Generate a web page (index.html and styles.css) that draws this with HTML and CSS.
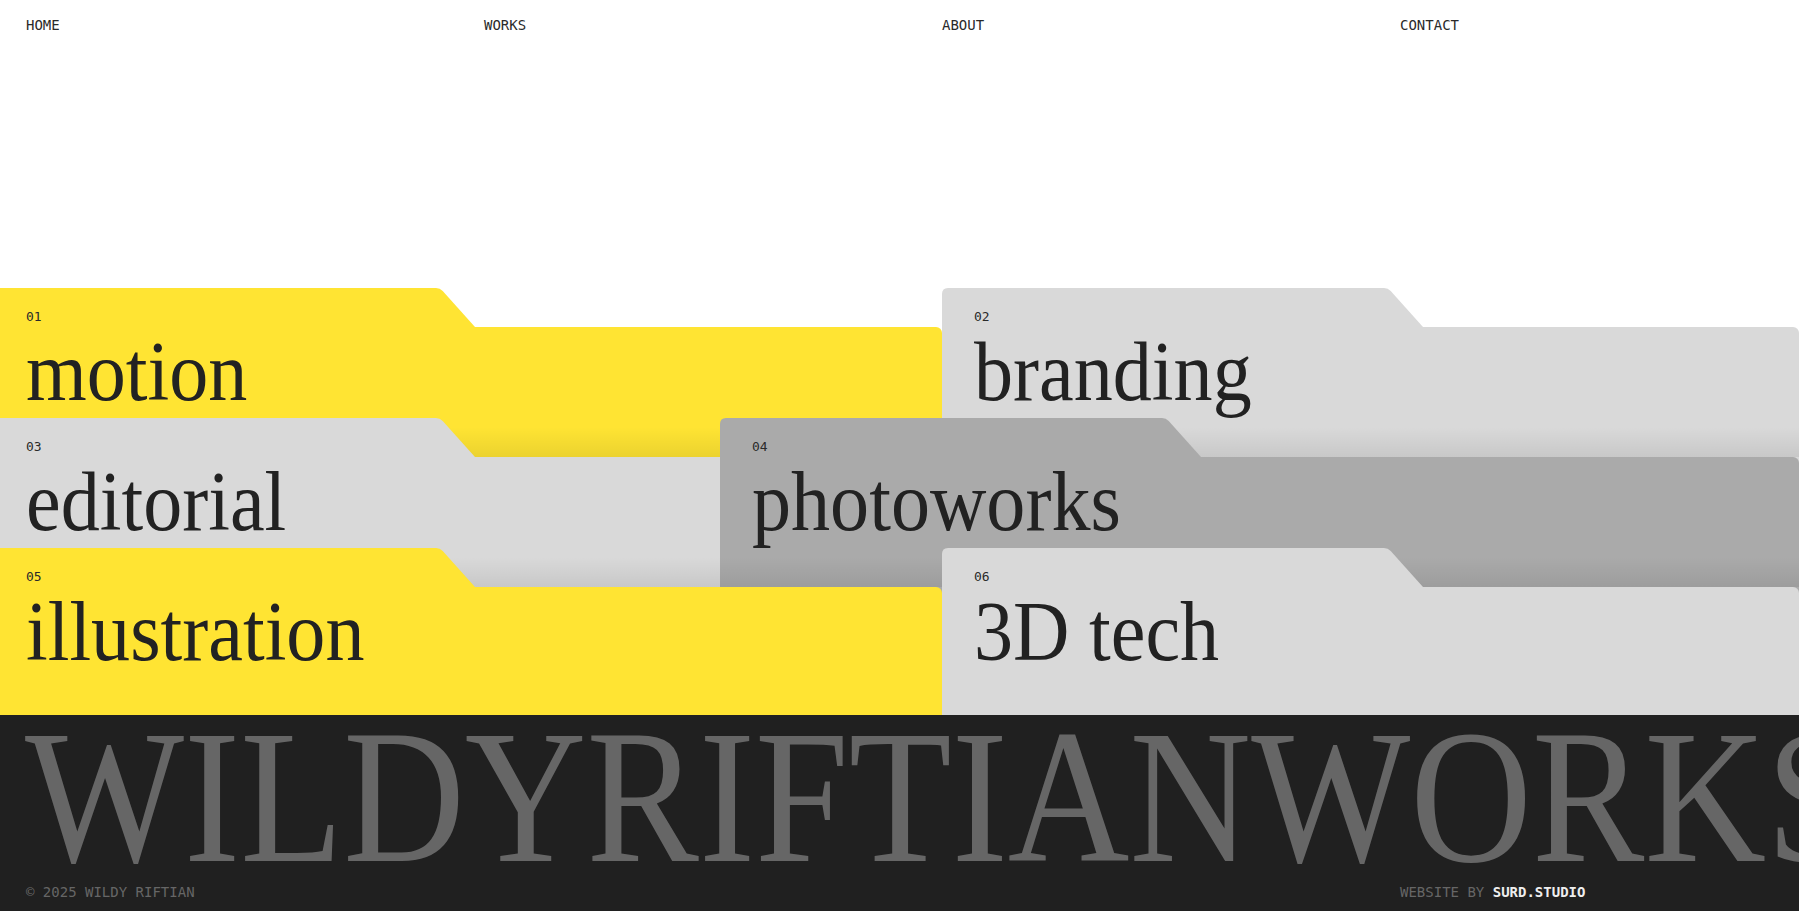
FILE: index.html
```html
<!DOCTYPE html>
<html lang="en">
<head>
<meta charset="utf-8">
<title>Wildy Riftian Works</title>
<link rel="stylesheet" href="styles.css">
</head>
<body>
<header class="nav">
  <a class="nav-link" href="#">HOME</a>
  <a class="nav-link" href="#">WORKS</a>
  <a class="nav-link" href="#">ABOUT</a>
  <a class="nav-link" href="#">CONTACT</a>
</header>

<main class="folders">
  <article class="card card-yellow pos-1">
    <div class="tab"><span class="num">01</span></div>
    <div class="body"><h2 class="word">motion</h2></div>
  </article>
  <article class="card card-light pos-2">
    <div class="tab"><span class="num">02</span></div>
    <div class="body"><h2 class="word">branding</h2></div>
  </article>
  <article class="card card-light pos-3 has-shadow">
    <div class="tab"><span class="num">03</span></div>
    <div class="body"><h2 class="word">editorial</h2></div>
  </article>
  <article class="card card-dark pos-4 has-shadow">
    <div class="tab"><span class="num">04</span></div>
    <div class="body"><h2 class="word">photoworks</h2></div>
  </article>
  <article class="card card-yellow pos-5 has-shadow">
    <div class="tab"><span class="num">05</span></div>
    <div class="body"><h2 class="word">illustration</h2></div>
  </article>
  <article class="card card-light pos-6 has-shadow">
    <div class="tab"><span class="num">06</span></div>
    <div class="body"><h2 class="word">3D tech</h2></div>
  </article>
</main>

<footer class="footer">
  <div class="brand-row"><span class="brand">WILDYRIFTIANWORKS</span></div>
  <div class="credits">
    <span class="copy">© 2025 WILDY RIFTIAN</span>
    <span class="spacer"></span>
    <span class="spacer"></span>
    <span class="by">WEBSITE BY <b class="studio">SURD.STUDIO</b></span>
  </div>
</footer>
</body>
</html>
```

FILE: styles.css
```css
* { box-sizing: border-box; }

html, body {
  margin: 0;
  padding: 0;
  background: #ffffff;
}

body {
  width: 1799px;
  height: 911px;
  overflow: hidden;
  font-family: "DejaVu Sans Mono", "Liberation Mono", monospace;
  color: #222222;
}

/* ---------- nav ---------- */
.nav {
  height: 288px;
  display: grid;
  grid-template-columns: repeat(3, 458px) 1fr;
  align-content: start;
  padding: 17px 26px 0;
}

.nav-link {
  font-size: 14px;
  line-height: 16px;
  color: #2a2a2a;
  text-decoration: none;
}

/* ---------- folders ---------- */
.folders {
  margin-left: -6px;
  width: calc(100% + 6px);
  display: grid;
  grid-template-columns: 726px 222px 1fr;
  grid-template-rows: 130px 130px 167px;
}

.pos-1 { grid-column: 1 / 3; grid-row: 1 / 3; }
.pos-2 { grid-column: 3 / 4; grid-row: 1 / 3; }
.pos-3 { grid-column: 1 / 3; grid-row: 2 / 4; }
.pos-4 { grid-column: 2 / 4; grid-row: 2 / 4; }
.pos-5 { grid-column: 1 / 3; grid-row: 3 / 4; }
.pos-6 { grid-column: 3 / 4; grid-row: 3 / 4; }

.card {
  display: flex;
  flex-direction: column;
  isolation: isolate;
  min-width: 0;
}

.card-yellow { --bg: #ffe433; }
.card-light  { --bg: #d9d9d9; }
.card-dark   { --bg: #aaaaaa; }

.tab {
  position: relative;
  z-index: 2;
  width: 481px;
  height: 39px;
  flex: none;
  background: var(--bg);
  clip-path: path("M0 39 L0 6 Q0 0 6 0 L442 0 Q446 0 448.7 3 L481 39 Z");
  padding: 21px 0 0 32px;
}

.num {
  display: block;
  font-size: 13px;
  line-height: 16px;
  color: #2a2a2a;
}

.body {
  position: relative;
  z-index: 1;
  flex: 1;
  background: var(--bg);
  border-top-right-radius: 6px;
  padding: 3px 32px 0;
}

.has-shadow .body::before {
  content: "";
  position: absolute;
  left: 0;
  right: 0;
  bottom: 100%;
  height: 30px;
  background: linear-gradient(to top, rgba(0, 0, 0, 0.08), rgba(0, 0, 0, 0));
  pointer-events: none;
}

.word {
  display: inline-block;
  margin: 0;
  font-family: "Liberation Serif", "Times New Roman", serif;
  font-weight: 400;
  font-size: 84px;
  line-height: 84px;
  letter-spacing: 0;
  color: #222222;
  white-space: nowrap;
  transform: scaleX(0.93);
  transform-origin: 0 0;
}

/* ---------- footer ---------- */
.footer {
  height: 196px;
  background: #202020;
  padding-top: 7px;
  overflow: hidden;
}

.brand-row {
  height: 150px;
  padding-left: 25px;
  white-space: nowrap;
  overflow: hidden;
}

.brand {
  display: inline-block;
  font-family: "Liberation Serif", "Times New Roman", serif;
  font-size: 190px;
  line-height: 150px;
  color: #666666;
  transform: scaleX(0.887);
  transform-origin: 0 0;
}

.credits {
  margin-top: 12px;
  display: grid;
  grid-template-columns: repeat(3, 458px) 1fr;
  padding: 0 26px;
  font-size: 14px;
  line-height: 16px;
  color: #666666;
}

.studio {
  color: #eeeeee;
  font-weight: 700;
}
```
